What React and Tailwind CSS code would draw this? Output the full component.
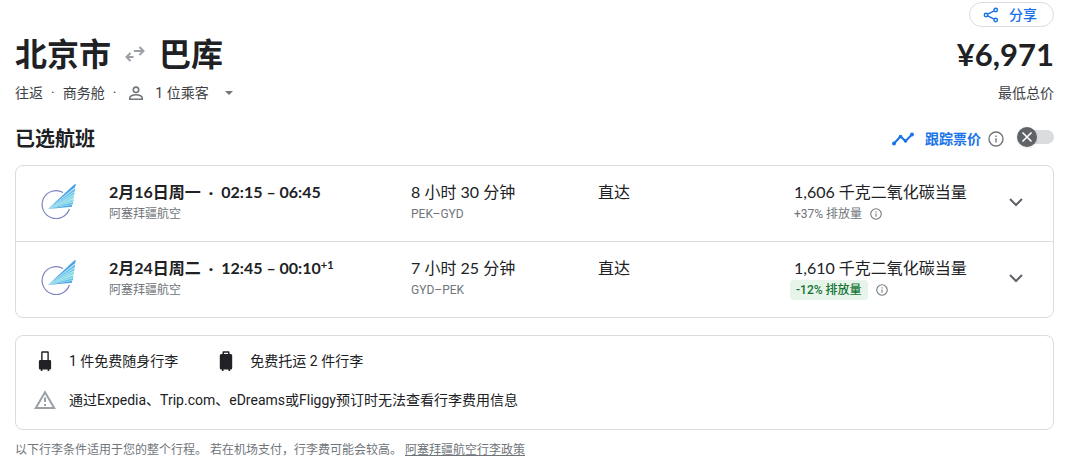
import React from "react";

const SwapIcon = () => (
  <svg className="w-5 h-4" viewBox="0 0 20 16" fill="none" stroke="#9aa0a6" strokeWidth="2">
    <path d="M9 5H18.5M14.5 1l4 4-4 4" />
    <path d="M8.5 11H1.5M5.5 7l-4 4 4 4" />
  </svg>
);

const ShareIcon = () => (
  <svg className="w-4 h-4" viewBox="0 0 16 16" fill="none" stroke="#1a73e8" strokeWidth="1.5">
    <circle cx="12.7" cy="3" r="1.7" />
    <circle cx="3" cy="8" r="1.7" />
    <circle cx="12.7" cy="13" r="1.7" />
    <path d="M4.6 7.2l6.6-3.4M4.6 8.8l6.6 3.4" />
  </svg>
);

const PersonIcon = () => (
  <svg className="w-4 h-4" viewBox="0 0 16 16" fill="none" stroke="#70757a" strokeWidth="1.6">
    <circle cx="8" cy="4.8" r="2.7" />
    <path d="M1.8 14.2v-1.4c0-1.9 3.6-3 6.2-3s6.2 1.1 6.2 3v1.4z" />
  </svg>
);

const TrackIcon = () => (
  <svg className="w-6 h-4" viewBox="0 0 24 16" fill="none" stroke="#1a73e8" strokeWidth="2">
    <path d="M3 12.5L9.5 5.5l5 4.5L21 3.5" />
    <g fill="#1a73e8" stroke="none">
      <circle cx="3" cy="12.5" r="2" />
      <circle cx="9.5" cy="5.5" r="1.8" />
      <circle cx="14.5" cy="10" r="1.8" />
      <circle cx="21" cy="3.5" r="2" />
    </g>
  </svg>
);

const InfoIcon = ({ className }) => (
  <svg className={className} viewBox="0 0 16 16" fill="none" stroke="#70757a" strokeWidth="1.4">
    <circle cx="8" cy="8" r="7" />
    <path d="M8 7.2v4.3M8 4.4v1.5" />
  </svg>
);

const ChevronIcon = () => (
  <svg className="w-4 h-4" viewBox="0 0 16 16" fill="none" stroke="#5f6368" strokeWidth="2">
    <path d="M2 5l6 6 6-6" />
  </svg>
);

const AirlineLogo = () => (
  <svg className="w-[35px] h-[35px]" viewBox="0 0 35 35" fill="none">
    <path d="M22 8.4A14 14 0 1 0 28.4 25" stroke="#7d83bd" strokeWidth="1.2" />
    <path d="M7 25L33.5 0.3 35 0.5 33.8 3.5z" fill="#4aa3e8" />
    <path d="M7 25L34 4.5v2.5z" fill="#5ab8ec" />
    <path d="M7 25L33.5 8v2.6z" fill="#74cdea" />
    <path d="M7 25L33 11.5v2.6z" fill="#8fdce5" />
    <path d="M7 25L32.5 15v2.4z" fill="#8ddbe3" />
    <path d="M7 25L32 18v2.2z" fill="#62bfea" />
    <path d="M7 25L31 20.8v2z" fill="#4ba5e6" />
    <path d="M7 25L28 8 33 7 31 21z" fill="#7fd0ea" opacity="0.35" />
  </svg>
);

const CarryOnIcon = () => (
  <svg className="w-4 h-5" viewBox="0 0 16 20" fill="#202124">
    <path d="M4.2 9.5V1.3A1 1 0 0 1 5.2.3h5.6a1 1 0 0 1 1 1v8.2h-1.4V1.8H5.6v7.7z" />
    <path d="M3.2 9h9.6a1.3 1.3 0 0 1 1.3 1.3v7a1.3 1.3 0 0 1-1.3 1.3h-.6V20h-1.6v-1.4H5.4V20H3.8v-1.4h-.6a1.3 1.3 0 0 1-1.3-1.3v-7A1.3 1.3 0 0 1 3.2 9z" />
  </svg>
);

const SuitcaseIcon = () => (
  <svg className="w-4 h-5" viewBox="0 0 16 20" fill="#202124">
    <path d="M4.5 3V1.2a.9.9 0 0 1 .9-.9h5.2a.9.9 0 0 1 .9.9V3h1.2a1.5 1.5 0 0 1 1.5 1.5v12.6a1.5 1.5 0 0 1-1.5 1.5h-.6V20h-1.6v-1.4H5.5V20H3.9v-1.4h-.6a1.5 1.5 0 0 1-1.5-1.5V4.5A1.5 1.5 0 0 1 3.3 3zM6 3h4V1.7H6z" />
  </svg>
);

const WarningIcon = () => (
  <svg className="w-[22px] h-5" viewBox="0 0 22 20" fill="none" stroke="#9aa0a6" strokeWidth="2">
    <path d="M11 2.2L20.2 18H1.8z" />
    <path d="M11 7.5v4.5M11 14v2" />
  </svg>
);

const flights = [
  {
    id: 1,
    date: "2月16日周一",
    time: "02:15 – 06:45",
    airline: "阿塞拜疆航空",
    duration: "8 小时 30 分钟",
    route: "PEK–GYD",
    stops: "直达",
    co2: "1,606 千克二氧化碳当量",
    emissions: "+37% 排放量",
  },
  {
    id: 2,
    date: "2月24日周二",
    time: "12:45 – 00:10",
    extraDay: "+1",
    airline: "阿塞拜疆航空",
    duration: "7 小时 25 分钟",
    route: "GYD–PEK",
    stops: "直达",
    co2: "1,610 千克二氧化碳当量",
    emissions: "-12% 排放量",
    lower: true,
  },
];

const FlightRow = ({ flight }) => {
  return (
    <li className="grid grid-cols-[68px_302fr_187fr_196fr_212fr_20px] pl-[25px] pr-[27px] pt-[14px] pb-[17px] font-['Lato','Noto_Sans_CJK_SC',sans-serif]">
      <div className="pt-1">
        <AirlineLogo />
      </div>

      {/* Date and times */}
      <div>
        <p className="font-bold text-base leading-6">
          {flight.date}
          <span className="mx-2">·</span>
          {flight.time}
          {flight.extraDay && (
            <sup className="text-[11px] leading-none">{flight.extraDay}</sup>
          )}
        </p>
        <p className="text-xs leading-5 text-[#70757a]">{flight.airline}</p>
      </div>

      {/* Duration */}
      <div>
        <p className="text-base leading-6">{flight.duration}</p>
        <p className="font-['Roboto',sans-serif] text-xs leading-5 text-[#70757a]">{flight.route}</p>
      </div>

      <p className="text-base leading-6">{flight.stops}</p>

      {/* Emissions */}
      <div>
        <p className="text-base leading-6">{flight.co2}</p>
        <div className="flex items-center font-['Roboto','Noto_Sans_CJK_SC',sans-serif] text-xs leading-5 text-[#70757a]">
          {flight.lower ? (
            <span className="-ml-1 mr-2 px-[6px] rounded-sm bg-[#e6f4ea] text-[#137333] font-medium">
              {flight.emissions}
            </span>
          ) : (
            <span className="mr-2">{flight.emissions}</span>
          )}
          <InfoIcon className="w-3 h-3" />
        </div>
      </div>

      <button type="button" aria-label="航班详情" className="flex justify-center pt-[14px]">
        <ChevronIcon />
      </button>
    </li>
  );
};

const App = () => {
  return (
    <main className="pl-[15px] pr-[26px] pt-[2px] bg-white text-[#202124] font-['Roboto','Noto_Sans_CJK_SC',sans-serif]">
      <div className="flex justify-end">
        <button
          type="button"
          className="flex items-center gap-[10px] h-[25px] pl-[13px] pr-4 rounded-full border border-[#dadce0] text-sm font-medium text-[#1a73e8]"
        >
          <ShareIcon />
          分享
        </button>
      </div>

      {/* Route and price */}
      <div className="flex items-center justify-between mt-[7px] font-['Lato','Noto_Sans_CJK_SC',sans-serif] font-bold leading-10">
        <h1 className="flex items-center gap-[14px] text-[32px]">
          北京市
          <SwapIcon />
          巴库
        </h1>
        <span className="text-[31px]">¥6,971</span>
      </div>

      <div className="flex items-center justify-between mt-[9px] text-sm leading-5 text-[#3c4043]">
        <div className="flex items-center">
          <span>往返</span>
          <span className="mx-2">·</span>
          <span>商务舱</span>
          <span className="mx-2">·</span>
          <button type="button" className="flex items-center ml-1">
            <PersonIcon />
            <span className="ml-[11px] mr-4">1 位乘客</span>
            <span className="border-x-4 border-x-transparent border-t-4 border-t-[#70757a]" />
          </button>
        </div>
        <span>最低总价</span>
      </div>

      {/* Selected flights */}
      <div className="flex items-center justify-between mt-[22px]">
        <h2 className="text-xl leading-7 font-bold">已选航班</h2>
        <div className="flex items-center">
          <TrackIcon />
          <label htmlFor="track" className="ml-[10px] mr-[7px] text-sm font-bold text-[#1a73e8]">
            跟踪票价
          </label>
          <InfoIcon className="w-4 h-4" />
          <span className="relative flex ml-[14px] -mt-1">
            <input
              id="track"
              type="checkbox"
              className="appearance-none w-9 h-[14px] rounded-full bg-[#dadce0]"
            />
            <svg
              className="absolute -left-px -top-[3px] w-5 h-5 pointer-events-none rounded-full bg-[#5f6368] shadow"
              viewBox="0 0 20 20"
              stroke="#fff"
              strokeWidth="1.6"
            >
              <path d="M5.5 5.5l9 9M14.5 5.5l-9 9" />
            </svg>
          </span>
        </div>
      </div>

      <ul className="mt-3 rounded-lg border border-[#dadce0] divide-y divide-[#dadce0]">
        {flights.map((flight) => (
          <FlightRow key={flight.id} flight={flight} />
        ))}
      </ul>

      {/* Baggage */}
      <section className="mt-[17px] px-[18px] pt-[15px] pb-[19px] rounded-lg border border-[#dadce0] text-sm leading-5">
        <div className="flex">
          <div className="flex items-center mr-10">
            <span className="flex justify-center w-[22px] mr-[13px]">
              <CarryOnIcon />
            </span>
            1 件免费随身行李
          </div>
          <div className="flex items-center">
            <span className="mr-4">
              <SuitcaseIcon />
            </span>
            免费托运 2 件行李
          </div>
        </div>
        <div className="flex items-center mt-[19px]">
          <span className="mr-[13px]">
            <WarningIcon />
          </span>
          通过Expedia、Trip.com、eDreams或Fliggy预订时无法查看行李费用信息
        </div>
      </section>

      <p className="mt-[11px] text-xs leading-[18px] text-[#70757a]">
        以下行李条件适用于您的整个行程。 若在机场支付，行李费可能会较高。{" "}
        <a href="#policy" className="underline">
          阿塞拜疆航空行李政策
        </a>
      </p>
    </main>
  );
};

export default App;
